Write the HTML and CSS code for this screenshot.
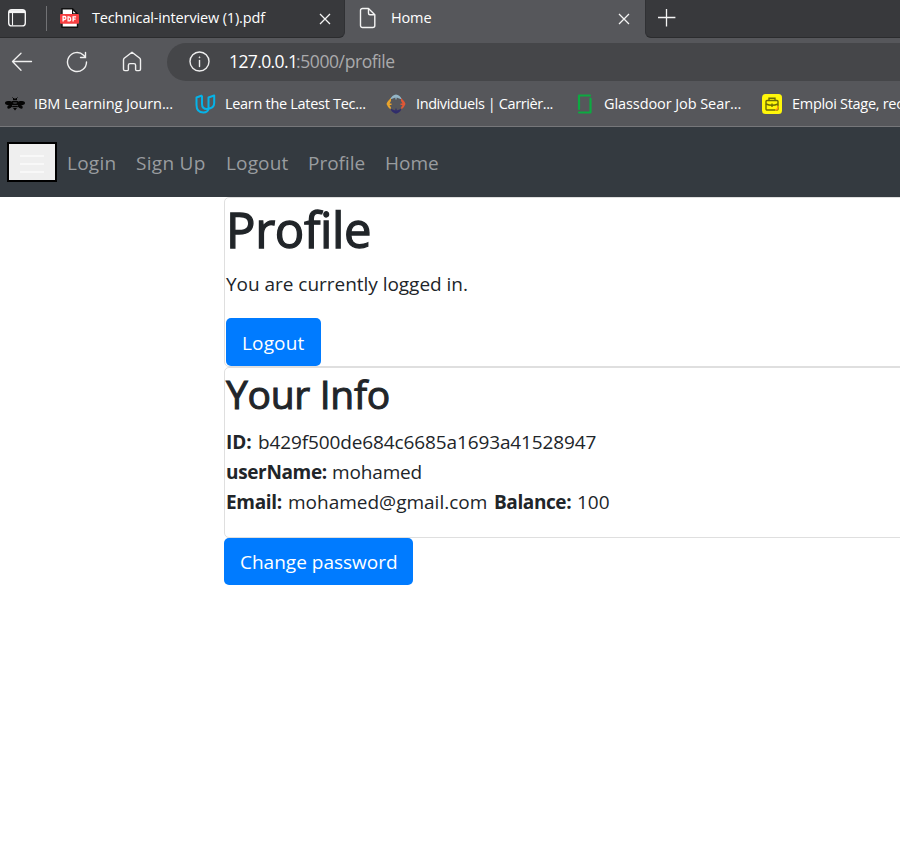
FILE: index.html
```html
<!DOCTYPE html>
<html lang="en">
<head>
<meta charset="utf-8">
<title>Home</title>
<link rel="stylesheet" href="styles.css">
</head>
<body>
<header class="browser">
  <div class="tabs">
    <div class="tab-lead">
      <svg class="ic-panel" width="20" height="20" viewBox="0 0 20 20" fill="none" stroke="#f5f5f5" stroke-width="1.4"><rect x="1.7" y="1.7" width="16.6" height="16.2" rx="3"/><path d="M2 3.600h16" stroke-width="3"/><path d="M5.500 5v12.500" stroke-width="1.1"/></svg>
      <span class="divider"></span>
      <svg class="ic-pdf" width="20" height="20" viewBox="0 0 20 20"><path d="M2 .8h10.5L17.5 6v13.2H2z" fill="#fff" stroke="#111" stroke-width="1.4"/><path d="M12 0v6.500h6.300z" fill="#111"/><path d="M13.200 2.700v2.500h2.500z" fill="#fff"/><rect x="0" y="6" width="19" height="9.700" rx="1" fill="#f73e40"/><g fill="none" stroke="#fff" stroke-width="1.3"><path d="M3.100 13.500v-5h1.500q1.300 0 1.300 1.500t-1.300 1.500H3.200M8.100 8.800v4.100h.8q1.700 0 1.700-2t-1.700-2.100zM13.100 13.500V8.800h3M13.100 11.100h2.600"/></g></svg>
      <span class="tab-title pdf">Technical-interview (1).pdf</span>
      <svg class="ic-close first" width="12" height="12" viewBox="0 0 12 12" stroke="#f4f4f4" stroke-width="1.3"><path d="M1 1l10 10M11 1L1 11"/></svg>
    </div>
    <div class="tab-active">
      <svg class="ic-doc" width="18" height="22" viewBox="0 0 18 22" fill="none" stroke="#f4f4f4" stroke-width="1.4" stroke-linejoin="round"><path d="M3.500 1.500h6l6.300 6.200v10.800a2 2 0 0 1-2 2H3.500a2 2 0 0 1-2-2v-15a2 2 0 0 1 2-2z"/><path d="M9.500 1.700v4.500q0 1.500 1.500 1.500h4.500"/></svg>
      <span class="tab-title home">Home</span>
      <svg class="ic-close second" width="12" height="12" viewBox="0 0 12 12" stroke="#f4f4f4" stroke-width="1.3"><path d="M1 1l10 10M11 1L1 11"/></svg>
    </div>
    <div class="tab-rest">
      <svg width="18" height="18" viewBox="0 0 18 18" stroke="#f4f4f4" stroke-width="1.3"><path d="M0 8.500h17.400M8.500 0v17.400"/></svg>
    </div>
  </div>
  <div class="toolbar">
    <svg class="ic-back" width="22" height="20" viewBox="0 0 22 20" fill="none" stroke="#f0f0f0" stroke-width="1.3" stroke-linecap="round" stroke-linejoin="round"><path d="M10 1.300L1.500 9.500l8.500 8.700M1.700 9.500H20.500"/></svg>
    <svg class="ic-reload" width="22" height="22" viewBox="0 0 22 22" fill="none" stroke="#f0f0f0" stroke-width="1.4" stroke-linecap="round"><path d="M20.500 11A9.500 9.500 0 1 1 17.600 4.200L19 5.700M19.500 1.500v5h-5"/></svg>
    <svg class="ic-house" width="20" height="21" viewBox="0 0 20 21" fill="none" stroke="#f0f0f0" stroke-width="1.4" stroke-linejoin="round"><path d="M1.500 9q0-1 .7-1.700L10 1.200l7.800 6.100q.7.700.7 1.700v9.200q0 1.400-1.400 1.400h-2.500q-1 0-1-1v-4.400q0-1.600-1.600-1.600H8q-1.600 0-1.600 1.600v4.400q0 1-1 1H2.900q-1.400 0-1.400-1.400z"/></svg>
    <div class="address">
      <svg width="22" height="22" viewBox="0 0 22 22" fill="none" stroke="#eee" stroke-width="1.4"><circle cx="10.500" cy="10.500" r="9.500"/><path d="M10.500 9.500v6" stroke-linecap="round"/><circle cx="10.500" cy="6.300" r=".5" fill="#eee" stroke-width=".8"/></svg>
      <span class="url"><span class="host">127.0.0.1</span><span class="path">:5000/profile</span></span>
    </div>
  </div>
  <div class="bookmarks">
    <div class="bm bm1">
      <svg width="20" height="16" viewBox="0 0 20 16"><g fill="#050505"><ellipse cx="4.200" cy="7.200" rx="4.200" ry="2.200" transform="rotate(8 4.200 7.200)"/><ellipse cx="15.800" cy="7.200" rx="4.200" ry="2.200" transform="rotate(-8 15.800 7.200)"/><ellipse cx="4.700" cy="10.700" rx="2.700" ry="1.600" transform="rotate(-30 4.700 10.700)"/><ellipse cx="15.300" cy="10.700" rx="2.700" ry="1.600" transform="rotate(30 15.300 10.700)"/><path d="M8 2.500h4v1.700H8zM7 5h6v1.600H7zM7.200 7.400h5.600v1.500H7.200zM7.200 9.700h5.600v1.500H7.200zM8 12h4l-2 2.500z"/></g><path d="M7.500 1.500L9 3M12.500 1.500L11 3" stroke="#050505"/></svg>
      <span>IBM Learning Journ...</span>
    </div>
    <div class="bm bm2">
      <svg width="21" height="20" viewBox="0 0 21 20" fill="none" stroke="#05b3e8" stroke-width="2" stroke-linejoin="round"><path d="M7 1.500L1.500 3.500V11C1.500 16 4.500 18.500 8.500 18.500q4.200-.2 5-3.500"/><path d="M7 1.500V10Q7 15 12 15 19.200 14.500 19.200 9V1.500L13.500 3.500V14.500"/></svg>
      <span>Learn the Latest Tec...</span>
    </div>
    <div class="bm bm3">
      <svg width="20" height="20" viewBox="0 0 20 20"><path d="M4 5.500Q6 1 10 .5 14 1 16 5.500l-3.500-1.300L10.700 3.500 10.500 5.500h-1L9.300 3.500 7.500 4.200z" fill="#94b6c7"/><path d="M5 4Q1 7.500.5 10q1 3 4 5.500L5 13.500 3.500 11H5.500V9.500H3.500L5 7z" fill="#e9a42c"/><path d="M15 4Q19 7.500 19.500 10q-1 3-4 5.500L15 13.500 16.500 11H14.500V9.500H16.500L15 7z" fill="#df5736"/><path d="M4.500 14.800L9.300 16.500 9.500 14.500h1L10.700 16.500 15.500 14.800Q14 19 10 19.700 6 19 4.500 14.800z" fill="#302d6b"/></svg>
      <span>Individuels | Carrièr...</span>
    </div>
    <div class="bm bm4">
      <svg width="16" height="20" viewBox="0 0 16 20" fill="none" stroke="#0caa41" stroke-width="2.200"><path d="M2 15V1.500h11M2 18.500h11.500V4.500" stroke-linecap="round" stroke-linejoin="round"/></svg>
      <span>Glassdoor Job Sear...</span>
    </div>
    <div class="bm bm5">
      <svg width="20" height="20" viewBox="0 0 20 20" fill="none" stroke="#6c6b05" stroke-width="1.400"><rect width="20" height="20" rx="3.500" fill="#fff70a" stroke="none"/><rect x="4" y="6.500" width="12" height="9.500" rx="1"/><path d="M7 6.500V4.300h6V6.500M4 10q3 1.300 6 1.300t6-1.300M10 9.500v3.500"/><path d="M13 16q3 0 3-4" stroke="#ff9a10"/></svg>
      <span>Emploi Stage, rec</span>
    </div>
  </div>
</header>
<nav class="navbar">
  <button class="toggler" aria-label="Menu"><i></i><i></i><i></i></button>
  <a class="n1">Login</a><a class="n2">Sign Up</a><a class="n3">Logout</a><a class="n4">Profile</a><a class="n5">Home</a>
</nav>
<main class="content">
  <section class="card card-profile">
    <h1>Profile</h1>
    <p class="status">You are currently logged in.</p>
    <a class="btn btn-logout">Logout</a>
  </section>
  <section class="card card-info">
    <h2>Your Info</h2>
    <p class="row"><b class="k-id">ID:</b><span class="v-id">b429f500de684c6685a1693a41528947</span></p>
    <p class="row"><b class="k-user">userName:</b><span class="v-user">mohamed</span></p>
    <p class="row"><b class="k-mail">Email:</b><span class="v-mail">mohamed@gmail.com</span><b class="k-bal">Balance:</b><span class="v-bal">100</span></p>
  </section>
  <a class="btn btn-change">Change password</a>
</main>
</body>
</html>
```
FILE: styles.css
```css
* { box-sizing: border-box; }
body { margin: 0; width: 900px; height: 845px; overflow: hidden; background: #fff; color: #212529; font-family: "Open Sans", "Noto Sans", sans-serif; font-size: 19px; }
svg { display: block; flex: none; }
span, a, b, p, h1, h2 { white-space: nowrap; }
.browser { height: 127px; background: #56575b; border-bottom: 1px solid #76777a; overflow: hidden; color: #fff; }
.tabs { display: flex; height: 38px; }
.tab-lead { display: flex; width: 345px; background: #38393c; border-bottom: 1px solid #2b2c2e; border-right: 1px solid #303134; border-radius: 0 0 6px 0; }
.ic-panel { margin: 8px 0 0 7px; }
.divider { width: 1px; height: 25px; margin: 6px 0 0 19px; background: #717275; }
.ic-pdf { margin: 8px 0 0 13px; }
.tab-title { font-size: 14.5px; line-height: 36px; letter-spacing: -0.15px; }
.pdf { width: 227px; margin-left: 12px; }
.ic-close.first { margin-top: 13px; }
.tab-active { display: flex; width: 300px; }
.ic-doc { margin: 7px 0 0 14px; }
.home { width: 227px; margin-left: 14px; }
.ic-close.second { margin-top: 13px; }
.tab-rest { flex: 1; padding: 9px 0 0 12px; background: #38393c; border-bottom: 1px solid #2b2c2e; border-left: 1px solid #303134; border-radius: 0 0 0 6px; }
.toolbar { display: flex; height: 43px; padding-top: 5px; }
.ic-back { margin: 9px 0 0 11px; }
.ic-reload { margin: 8px 0 0 33px; }
.ic-house { margin: 8px 0 0 34px; }
.address { display: flex; flex: 1; align-items: center; height: 38px; margin-left: 25px; padding-left: 22px; background: #454649; border-radius: 19px 0 0 19px; }
.url { display: flex; margin-left: 18px; padding-bottom: 2px; font-size: 17.5px; }
.host { width: 67px; letter-spacing: -0.6px; }
.path { color: #aaaaac; letter-spacing: -0.4px; }
.bookmarks { display: flex; height: 45px; align-items: center; padding-left: 5px; font-size: 14.5px; }
.bm { display: flex; flex: none; align-items: center; }
.bm1 { width: 190px; gap: 9px; letter-spacing: -0.08px; }
.bm2 { width: 191px; gap: 9px; letter-spacing: -0.3px; }
.bm3 { width: 191px; gap: 10px; letter-spacing: -0.4px; }
.bm4 { width: 185px; gap: 11px; letter-spacing: -0.08px; }
.bm5 { gap: 10px; letter-spacing: -0.3px; }
.navbar { display: flex; align-items: center; height: 70px; padding-left: 7px; background: #343a40; color: #999c9f; line-height: 26px; }
.navbar a { padding-top: 2px; }
.toggler { display: flex; flex-direction: column; gap: 6px; width: 50px; height: 40px; padding: 11px 11px 0; border: 2px solid #000; background: #efefef; }
.toggler i { display: block; height: 2px; background: #f8f8f8; }
.n1 { width: 69px; margin-left: 10px; letter-spacing: 0.25px; }
.n2 { width: 90px; letter-spacing: 0.3px; }
.n3 { width: 82px; letter-spacing: 0.15px; }
.n4 { width: 77px; }
.content { display: flex; flex-direction: column; align-items: flex-start; margin-left: 224px; }
.card { width: 690px; border: 1px solid #dfdfdf; border-radius: 5px; padding-left: 1px; }
.card-profile { height: 170px; }
.card-info { height: 171px; }
h1, h2, p { margin: 0; }
h1 { height: 70px; font-size: 49px; line-height: 63px; font-weight: 400; letter-spacing: -0.35px; -webkit-text-stroke: 1.3px #212529; }
.status { height: 50px; line-height: 32px; letter-spacing: -0.03px; }
.btn { display: block; background: #007bff; color: #fff; border-radius: 5px; padding-left: 16px; letter-spacing: 0.15px; }
.btn-logout { width: 95px; height: 48px; line-height: 50px; }
.btn-change { width: 189px; height: 47px; line-height: 49px; letter-spacing: 0; }
h2 { height: 59px; font-size: 39px; line-height: 51px; font-weight: 400; letter-spacing: -0.3px; -webkit-text-stroke: 1px #212529; }
.row { display: flex; height: 30px; line-height: 30px; }
.k-id { width: 32px; }
.v-id { letter-spacing: -0.12px; }
.k-user { width: 106px; letter-spacing: -0.35px; }
.v-user { letter-spacing: -0.15px; }
.k-mail { width: 62px; letter-spacing: -0.3px; }
.v-mail { width: 206px; }
.k-bal { width: 83px; letter-spacing: -0.4px; }
```
